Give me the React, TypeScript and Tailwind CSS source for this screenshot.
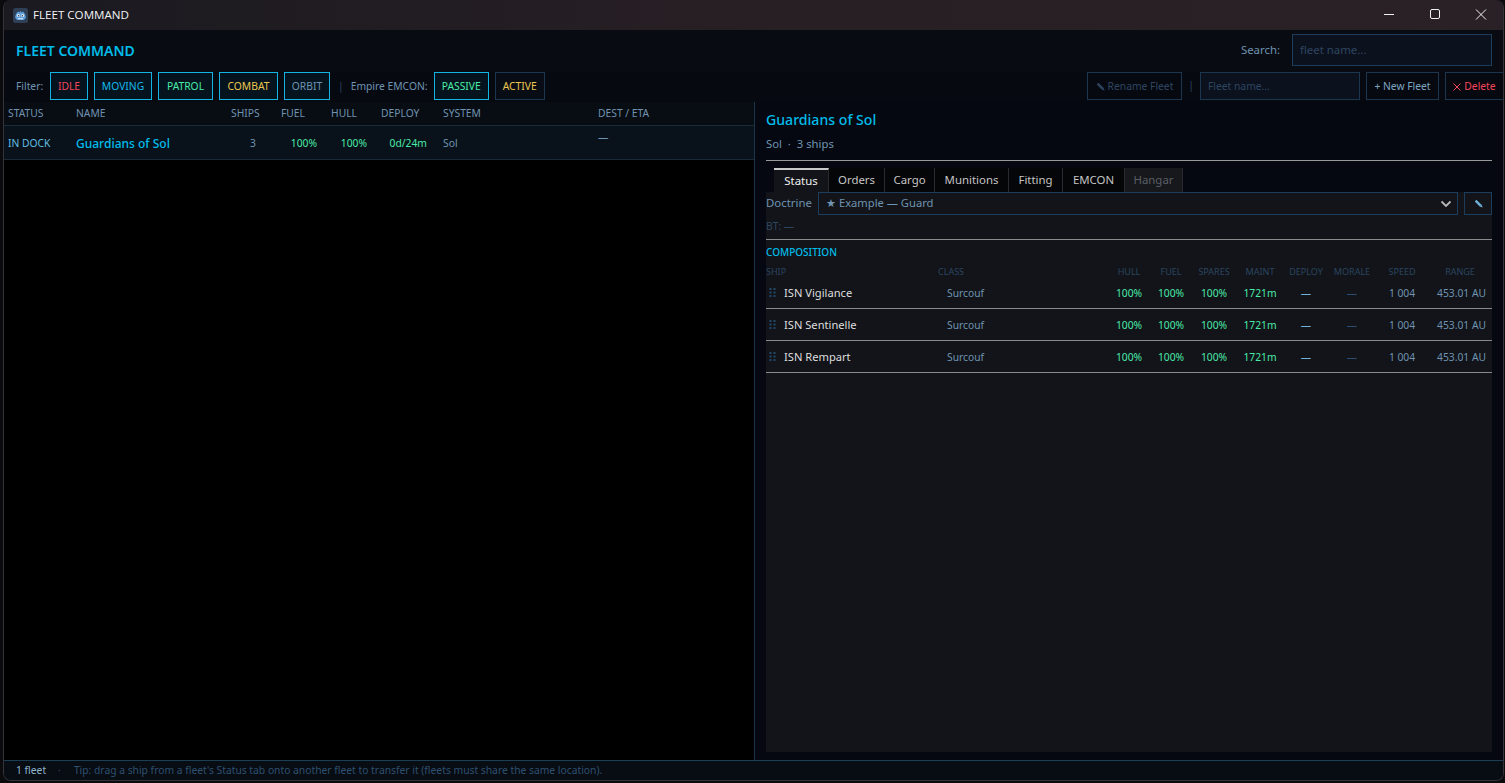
import React from "react";

const font = { fontFamily: '"Noto Sans", sans-serif' };

function PencilIcon({ color }: { color: string }) {
  return (
    <svg width="9" height="9" viewBox="0 0 9 9" className="shrink-0">
      <path d="M1.6 1.6 L6.6 6.6" stroke={color} strokeWidth="2.4" fill="none" />
      <path d="M5.6 7.6 L7.6 5.6 L8.6 8.6 Z" fill={color} />
    </svg>
  );
}

function GodotIcon() {
  return (
    <svg width="15" height="15" viewBox="0 0 15 15" className="shrink-0">
      <rect width="15" height="15" rx="2.5" fill="#2f3f56" />
      <path d="M3 6 L5 3.6 L6.4 4.4 L7.5 3 L8.6 4.4 L10 3.6 L12 6 L13 9.5 L11 12 L4 12 L2 9.5 Z" fill="#5fa0dc" />
      <circle cx="5.4" cy="7.6" r="1.5" fill="#e8f0f8" />
      <circle cx="9.6" cy="7.6" r="1.5" fill="#e8f0f8" />
      <circle cx="5.6" cy="7.7" r=".7" fill="#2a3448" />
      <circle cx="9.4" cy="7.7" r=".7" fill="#2a3448" />
      <rect x="5" y="10.2" width="5" height="1" fill="#dce8f4" />
    </svg>
  );
}

function Filter({ label, color, width, on = true }: { label: string; color: string; width: string; on?: boolean }) {
  return (
    <div
      className={`${width} h-[28px] pt-[1px] flex items-center justify-center border text-[10.3px] whitespace-nowrap ${
        on ? "border-[#13b4e2] bg-[#04131d]" : "border-[#1c3650] bg-[#080c14]"
      }`}
      style={{ color }}
    >
      {label}
    </div>
  );
}

const tabs = ["Status", "Orders", "Cargo", "Munitions", "Fitting", "EMCON", "Hangar"];
const tabWidths = ["w-[55px]", "w-[56px]", "w-[50px]", "w-[74px]", "w-[54px]", "w-[62px]", "w-[58px]"];
const shipCols = "grid grid-cols-[172px_170px_42px_42px_44px_48px_44px_48px_52px_64px]";
const fleetCols = "grid grid-cols-[68px_155px_50px_50px_50px_62px_155px_1fr]";
const ships = ["ISN Vigilance", "ISN Sentinelle", "ISN Rempart"];
const shipHeads = ["HULL", "FUEL", "SPARES", "MAINT", "DEPLOY", "MORALE", "SPEED", "RANGE"];

export default function App() {
  return (
    <div className="w-[1505px] h-[783px] bg-[#0b0b0e] overflow-hidden" style={font}>
      <div className="ml-[3px] mr-[1px] h-[781px] flex flex-col rounded-[8px] overflow-hidden border-b border-x border-[#34343a] bg-[#060910]">
        {/* OS title bar */}
        <div className="h-[30px] shrink-0 flex items-center bg-gradient-to-r from-[#1a1a20] via-[#281f24] to-[#2a2127] pl-[9px]">
          <GodotIcon />
          <span className="ml-[5px] text-[11.6px] text-[#f2f2f2]" style={{ fontFamily: '"Open Sans", sans-serif' }}>
            FLEET COMMAND
          </span>
          <div className="ml-auto -mr-[1px] flex items-center">
            <svg width="46" height="30" viewBox="0 0 46 30">
              <path d="M18 14.5 H28" stroke="#f0f0f0" strokeWidth="1" />
            </svg>
            <svg width="46" height="30" viewBox="0 0 46 30">
              <rect x="18.5" y="9.5" width="9" height="9" rx="1.5" fill="none" stroke="#f0f0f0" strokeWidth="1" />
            </svg>
            <svg width="46" height="30" viewBox="0 0 46 30">
              <path d="M18 9.5 L28 19.5 M28 9.5 L18 19.5" stroke="#f0f0f0" strokeWidth="1" />
            </svg>
          </div>
        </div>

        {/* Header */}
        <div className="h-[42px] shrink-0 flex items-center pb-[2px] bg-[#080b12] pl-[12px] pr-[11px]">
          <span className="text-[14px] font-semibold text-[#00bcea]">FLEET COMMAND</span>
          <span className="ml-auto text-[11.4px] text-[#6f93b0]">Search:</span>
          <div className="ml-[12px] w-[200px] h-[32px] border border-[#1c3e5c] bg-[#0b111d] flex items-center px-[7px] text-[11.4px] text-[#2e4560]">
            fleet name...
          </div>
        </div>

        {/* Filter row */}
        <div className="h-[30px] shrink-0 flex items-start bg-[#060910] pl-[12px] -mr-[1px]">
          <span className="w-[34px] shrink-0 pt-[1px] text-[10.3px] text-[#6f93b0] h-[28px] flex items-center">Filter:</span>
          <div className="flex gap-[6px]">
            <Filter label="IDLE" color="#f2455a" width="w-[38px]" />
            <Filter label="MOVING" color="#16b8ea" width="w-[58px]" />
            <Filter label="PATROL" color="#4aeaa8" width="w-[55px]" />
            <Filter label="COMBAT" color="#ecc64f" width="w-[59px]" />
            <Filter label="ORBIT" color="#6f93b0" width="w-[46px]" />
          </div>
          <span className="ml-[8px] pt-[1px] h-[28px] flex items-center text-[10.3px] text-[#2e4560]">|</span>
          <span className="ml-[7px] w-[83px] pt-[1px] h-[28px] flex items-center text-[10.3px] whitespace-nowrap text-[#6f93b0]">Empire EMCON:</span>
          <div className="flex gap-[6px]">
            <Filter label="PASSIVE" color="#4aeaa8" width="w-[55px]" />
            <Filter label="ACTIVE" color="#ecc64f" width="w-[50px]" on={false} />
          </div>
          <div className="ml-auto flex items-start">
            <div className="h-[28px] pt-[1px] w-[95px] border border-[#1c3650] flex items-center justify-center gap-[3px] text-[10.3px] text-[#2e4560]">
              <PencilIcon color="#2e4560" />
              Rename Fleet
            </div>
            <span className="w-[18px] text-center h-[28px] flex items-center justify-center text-[10.3px] text-[#2e4560]">|</span>
            <div className="h-[28px] pt-[1px] w-[160px] border border-[#1c3650] bg-[#0b111d] flex items-center px-[7px] text-[10.3px] text-[#2e4560]">
              Fleet name...
            </div>
            <div className="ml-[6px] pt-[1px] h-[28px] w-[73px] border border-[#1c3650] flex items-center justify-center text-[10.3px] text-[#7fa6c0]">
              + New Fleet
            </div>
            <div className="ml-[6px] pt-[1px] h-[28px] w-[59px] border border-[#1c3650] flex items-center justify-center gap-[3px] text-[10.3px] text-[#f2455a]">
              <svg width="8" height="8" viewBox="0 0 8 8">
                <path d="M.5 .5 L7.5 7.5 M7.5 .5 L.5 7.5" stroke="#f2455a" strokeWidth="1" />
              </svg>
              Delete
            </div>
          </div>
        </div>

        {/* Main */}
        <div className="flex-1 min-h-0 flex">
          {/* Left list */}
          <div className="w-[751px] shrink-0 flex flex-col bg-black border-r border-[#1a3448]">
            <div className={`${fleetCols} h-[24px] shrink-0 items-center pl-[4px] bg-[#080c13] border-b border-[#1a2a38] text-[10.3px] text-[#6f93b0]`}>
              <span>STATUS</span>
              <span>NAME</span>
              <span>SHIPS</span>
              <span>FUEL</span>
              <span>HULL</span>
              <span>DEPLOY</span>
              <span>SYSTEM</span>
              <span>DEST / ETA</span>
            </div>
            <div className={`${fleetCols} h-[34px] shrink-0 items-center pl-[4px] pt-[2px] bg-[#09121a] border-b border-[#1a2a38] text-[10.3px]`}>
              <span className="text-[#62bde0]">IN DOCK</span>
              <span className="text-[12px] font-medium text-[#00bcea]">Guardians of Sol</span>
              <span className="text-right pr-[25px] text-[#6f93b0]">3</span>
              <span className="text-right pr-[14px] text-[#4aeaa8]">100%</span>
              <span className="text-right pr-[14px] text-[#4aeaa8]">100%</span>
              <span className="text-right pr-[16px] text-[#4aeaa8]">0d/24m</span>
              <span className="text-[#6f93b0]">Sol</span>
              <span className="text-[#6f93b0] -mt-[12px]">—</span>
            </div>
          </div>

          {/* Right detail */}
          <div className="flex-1 min-w-0 flex flex-col bg-[#050810] pl-[11px] pr-[11px] pb-[8px]">
            <div className="h-[30px] shrink-0 flex items-center pt-[6px] text-[14.1px] font-medium text-[#00bcea]">Guardians of Sol</div>
            <div className="h-[24px] shrink-0 flex items-center text-[11.3px] text-[#6f93b0]">Sol&nbsp; ·&nbsp; 3 ships</div>
            <div className="h-[4px] shrink-0" />
            <div className="h-px shrink-0 bg-[#9a9a9a]" />
            <div className="h-[7px] shrink-0" />
            {/* Tabs */}
            <div className="h-[24px] shrink-0 flex pl-[8px]">
              {tabs.map((t, i) => (
                <div
                  key={t}
                  className={`${tabWidths[i]} flex items-center justify-center text-[11.4px] border-r ${
                    i === 0
                      ? "bg-[#121419] text-[#f0f0f0] border-t-2 border-t-[#c8c8c8] border-r-[#2a2a2e]"
                      : i === 6
                        ? "bg-[#17181c] text-[#5a5f66] border-r-[#2a2a2e]"
                        : "bg-[#050608] text-[#c4c4c4] border-r-[#2a2a2e]"
                  }`}
                >
                  {t}
                </div>
              ))}
            </div>
            {/* Panel */}
            <div className="flex-1 min-h-0 bg-[#121419] flex flex-col">
              <div className="h-[23px] shrink-0 flex items-center">
                <span className="w-[52px] shrink-0 pb-[1px] text-[11.4px] text-[#6f93b0]">Doctrine</span>
                <div className="w-[640px] h-[23px] border border-[#1c3e5c] flex items-center px-[7px] text-[11.2px] text-[#6f93b0]">
                  ★ Example — Guard
                  <svg width="12" height="8" viewBox="0 0 12 8" className="ml-auto -mr-[2px]">
                    <path d="M1.5 1.5 L6 6 L10.5 1.5" fill="none" stroke="#b8b8b8" strokeWidth="1.8" />
                  </svg>
                </div>
                <div className="ml-[6px] w-[28px] h-[23px] border border-[#1c3e5c] flex items-center justify-center">
                  <PencilIcon color="#6fb0d8" />
                </div>
              </div>
              <div className="h-[24px] shrink-0 flex items-center text-[10.3px] text-[#2e4560]">BT: —</div>
              <div className="h-px shrink-0 bg-[#8a8a8a]" />
              <div className="h-[25px] shrink-0 flex items-center text-[10px] font-medium text-[#00bcea]">COMPOSITION</div>
              <div className={`${shipCols} h-[12px] shrink-0 items-center pb-[4px] text-[9px] text-[#2a4560]`}>
                <span>SHIP</span>
                <span>CLASS</span>
                {shipHeads.map((h) => (
                  <span key={h} className="text-center">{h}</span>
                ))}
              </div>
              {ships.map((s) => (
                <div key={s} className={`${shipCols} h-[32px] shrink-0 items-center pt-[2px] border-b border-[#8a8a8a] text-[10.3px]`}>
                  <div className="flex items-center -mt-[1px]">
                    <svg width="9" height="11" viewBox="0 0 9 11" className="ml-[2px] mr-[7px] shrink-0">
                      {[1, 4.5, 8].map((y) =>
                        [1.5, 5.5].map((x) => <rect key={`${x}-${y}`} x={x} y={y} width="2" height="2" fill="#254868" />),
                      )}
                    </svg>
                    <span className="text-[11.15px] text-[#dedede]">{s}</span>
                  </div>
                  <span className="pl-[9px] text-[#6f93b0]">Surcouf</span>
                  <span className="text-center text-[#4aeaa8]">100%</span>
                  <span className="text-center text-[#4aeaa8]">100%</span>
                  <span className="text-center text-[#4aeaa8]">100%</span>
                  <span className="text-center text-[#4aeaa8]">1721m</span>
                  <span className="text-center text-[#6fb0d8]">—</span>
                  <span className="text-center text-[#2a4f70]">—</span>
                  <span className="text-center text-[#6f93b0]">1 004</span>
                  <span className="text-right pr-[6px] text-[#6f93b0]">453.01 AU</span>
                </div>
              ))}
            </div>
          </div>
        </div>

        {/* Status bar */}
        <div className="h-[20px] shrink-0 flex items-center border-t border-[#1a3f55] bg-[#080c13] pl-[12px] text-[10.3px]">
          <span className="text-[#8fb4cc]">1 fleet</span>
          <span className="ml-[12px] text-[#2e4560]">·</span>
          <span className="ml-[13px] text-[#2e5070]">
            Tip: drag a ship from a fleet's Status tab onto another fleet to transfer it (fleets must share the same location).
          </span>
        </div>
      </div>
    </div>
  );
}
